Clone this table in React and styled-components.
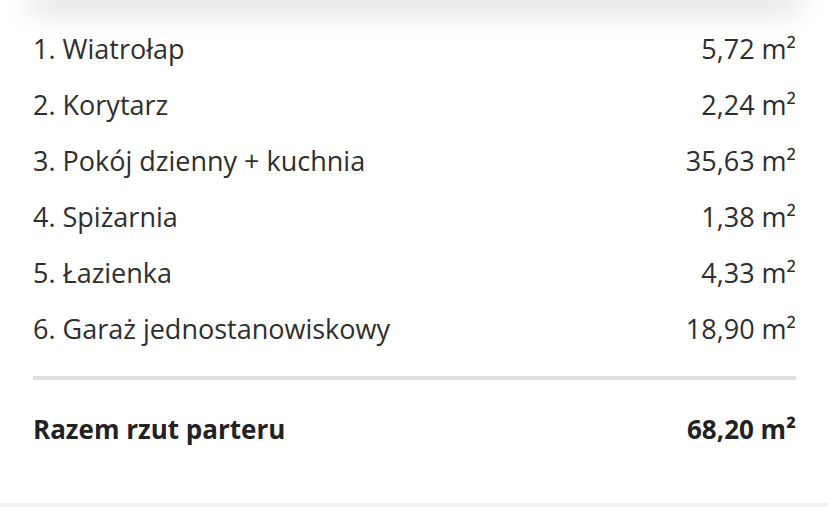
import styled, { createGlobalStyle } from "styled-components";

const rooms = [
  { name: "1. Wiatrołap", area: "5,72" },
  { name: "2. Korytarz", area: "2,24" },
  { name: "3. Pokój dzienny + kuchnia", area: "35,63" },
  { name: "4. Spiżarnia", area: "1,38" },
  { name: "5. Łazienka", area: "4,33" },
  { name: "6. Garaż jednostanowiskowy", area: "18,90" },
];

const GlobalStyle = createGlobalStyle`
  html, body {
    margin: 0;
    padding: 0;
    background: #fff;
  }
  body {
    font-family: "Open Sans", Lato, sans-serif;
    color: #2e2e2e;
    overflow: hidden;
  }
`;

const App = () => {
  return (
    <>
      <GlobalStyle />
      <Page>
        <TopShade />
        <Card>
          <List>
            {rooms.map((room) => (
              <Row key={room.name}>
                <span>{room.name}</span>
                <span>{room.area} m²</span>
              </Row>
            ))}
          </List>
          <Divider />
          <Row $total>
            <span>Razem rzut parteru</span>
            <span>68,20 m²</span>
          </Row>
        </Card>
        <Footer />
      </Page>
    </>
  );
};

export default App;

const Page = styled.div`
  display: flex;
  flex-direction: column;
  height: 507px;
  background: #fff;
`;

const TopShade = styled.div`
  height: 0;
  margin: 0 40px;
  box-shadow: 0 0 30px 12px rgba(0, 0, 0, 0.13);
`;

const Card = styled.div`
  display: flex;
  flex-direction: column;
  padding: 20px 32px 0 33px;
  flex: 1;
`;

const List = styled.div`
  display: flex;
  flex-direction: column;
`;

const Row = styled.div`
  display: flex;
  justify-content: space-between;
  align-items: center;
  height: 56px;
  font-size: ${({ $total }) => ($total ? "26px" : "27px")};
  font-weight: ${({ $total }) => ($total ? 700 : 400)};
  color: ${({ $total }) => ($total ? "#222" : "#2e2e2e")};
  margin-top: ${({ $total }) => ($total ? "21px" : "0")};
`;

const Divider = styled.div`
  height: 4px;
  margin-top: 20px;
  background: #dedede;
`;

const Footer = styled.div`
  height: 4px;
  background: #f2f2f2;
`;
